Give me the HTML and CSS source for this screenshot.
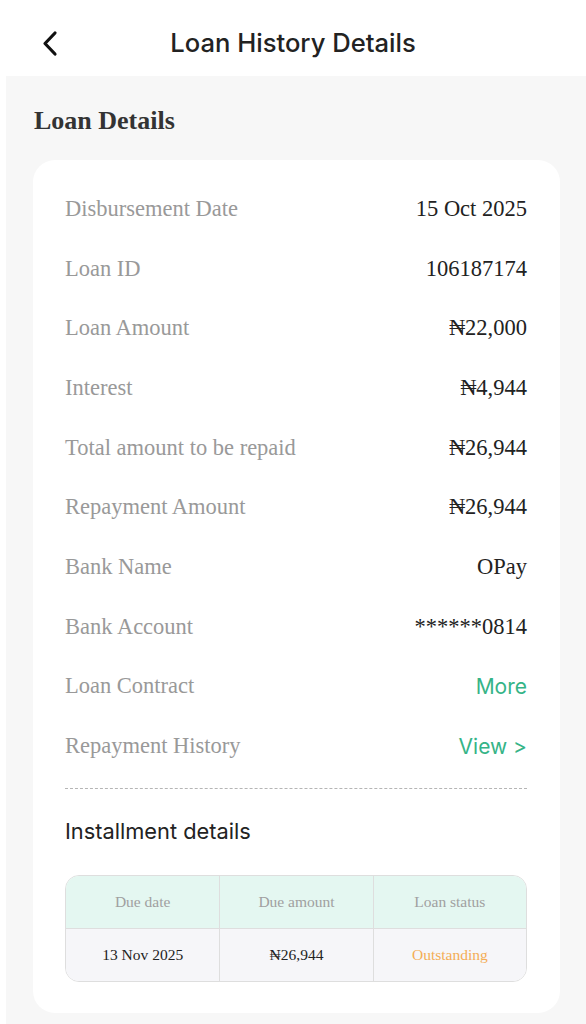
FILE: index.html
```html
<!DOCTYPE html>
<html lang="en">
<head>
  <meta charset="UTF-8">
  <meta name="viewport" content="width=device-width, initial-scale=1.0">
  <title>Loan History Details</title>
  <link rel="stylesheet" href="styles.css">
</head>
<body>
  <header class="topbar">
    <a href="#" class="back">
      <svg width="24" height="28" viewBox="0 0 24 28"><polyline points="14,4 4,14.5 14,25" fill="none" stroke="#111" stroke-width="3.2" stroke-linecap="round" stroke-linejoin="round"/></svg>
    </a>
    <h1>Loan History Details</h1>
  </header>

  <main class="page">
    <h2 class="section-title">Loan Details</h2>
    <div class="card">
      <div class="row"><span class="label">Disbursement Date</span><span class="value">15 Oct 2025</span></div>
      <div class="row"><span class="label">Loan ID</span><span class="value">106187174</span></div>
      <div class="row"><span class="label">Loan Amount</span><span class="value">₦22,000</span></div>
      <div class="row"><span class="label">Interest</span><span class="value">₦4,944</span></div>
      <div class="row"><span class="label">Total amount to be repaid</span><span class="value">₦26,944</span></div>
      <div class="row"><span class="label">Repayment Amount</span><span class="value">₦26,944</span></div>
      <div class="row"><span class="label">Bank Name</span><span class="value">OPay</span></div>
      <div class="row"><span class="label">Bank Account</span><span class="value">******0814</span></div>
      <div class="row"><span class="label">Loan Contract</span><a href="#" class="link">More</a></div>
      <div class="row"><span class="label">Repayment History</span><a href="#" class="link">View &gt;</a></div>

      <hr class="dash">

      <h3 class="sub-title">Installment details</h3>
      <table class="plan">
        <thead>
          <tr><th>Due date</th><th>Due amount</th><th>Loan status</th></tr>
        </thead>
        <tbody>
          <tr><td>13 Nov 2025</td><td>₦26,944</td><td class="owing">Outstanding</td></tr>
        </tbody>
      </table>
    </div>
  </main>
</body>
</html>
```

FILE: styles.css
```css
body{
  margin: 0;
  background: #fff;
  font-family: "Liberation Serif", "Times New Roman", serif;
}
.topbar{
  height: 76px;
  box-sizing: border-box;
  padding-top: 8px;
  display: flex;
  align-items: center;
  justify-content: center;
  position: relative;
}
.topbar h1{
  margin: 0;
  font-family: Inter, Roboto, "Noto Sans", sans-serif;
  font-size: 25.6px;
  font-weight: 500;
  color: #222;
}
.back{
  position: absolute;
  left: 41px;
  top: 29px;
  display: flex;
}
.page{
  margin-left: 6px;
  background: #f7f7f7;
  padding: 31px 26px 11px 27px;
}
.section-title{
  margin: 0 0 25px 1px;
  font-size: 26px;
  line-height: 28px;
  font-weight: bold;
  color: #333;
}
.card{
  background: #fff;
  border-radius: 22px;
  padding: 19px 33px 31px 32px;
}
.row{
  display: flex;
  justify-content: space-between;
  align-items: center;
  height: 59.7px;
  font-size: 22.5px;
}
.label{
  color: #999;
}
.value{
  color: #222;
}
.link{
  font-family: Inter, Roboto, "Noto Sans", sans-serif;
  color: #35b487;
  text-decoration: none;
  font-size: 21px;
}
.dash{
  border: none;
  border-top: 1px dashed #b5b5b5;
  margin: 12px 0 30px;
}
.sub-title{
  margin: 0 0 32px;
  font-family: Inter, Roboto, "Noto Sans", sans-serif;
  font-weight: 400;
  font-size: 21.8px;
  line-height: 24px;
  color: #222;
}
.plan{
  width: 100%;
  border-collapse: separate;
  border-spacing: 0;
  border: 1px solid #dedede;
  border-radius: 14px;
  overflow: hidden;
  table-layout: fixed;
  font-size: 15.5px;
}
.plan th, .plan td{
  height: 52px;
  padding: 0;
  text-align: center;
  font-weight: normal;
  border-left: 1px solid #dedede;
}
.plan th:first-child, .plan td:first-child{
  border-left: none;
}
.plan th{
  background: #e4f7f1;
  color: #a0a0a0;
  border-bottom: 1px solid #dedede;
}
.plan td{
  background: #f6f6f9;
  color: #222;
}
.plan .owing{
  color: #f4ad55;
}
```
